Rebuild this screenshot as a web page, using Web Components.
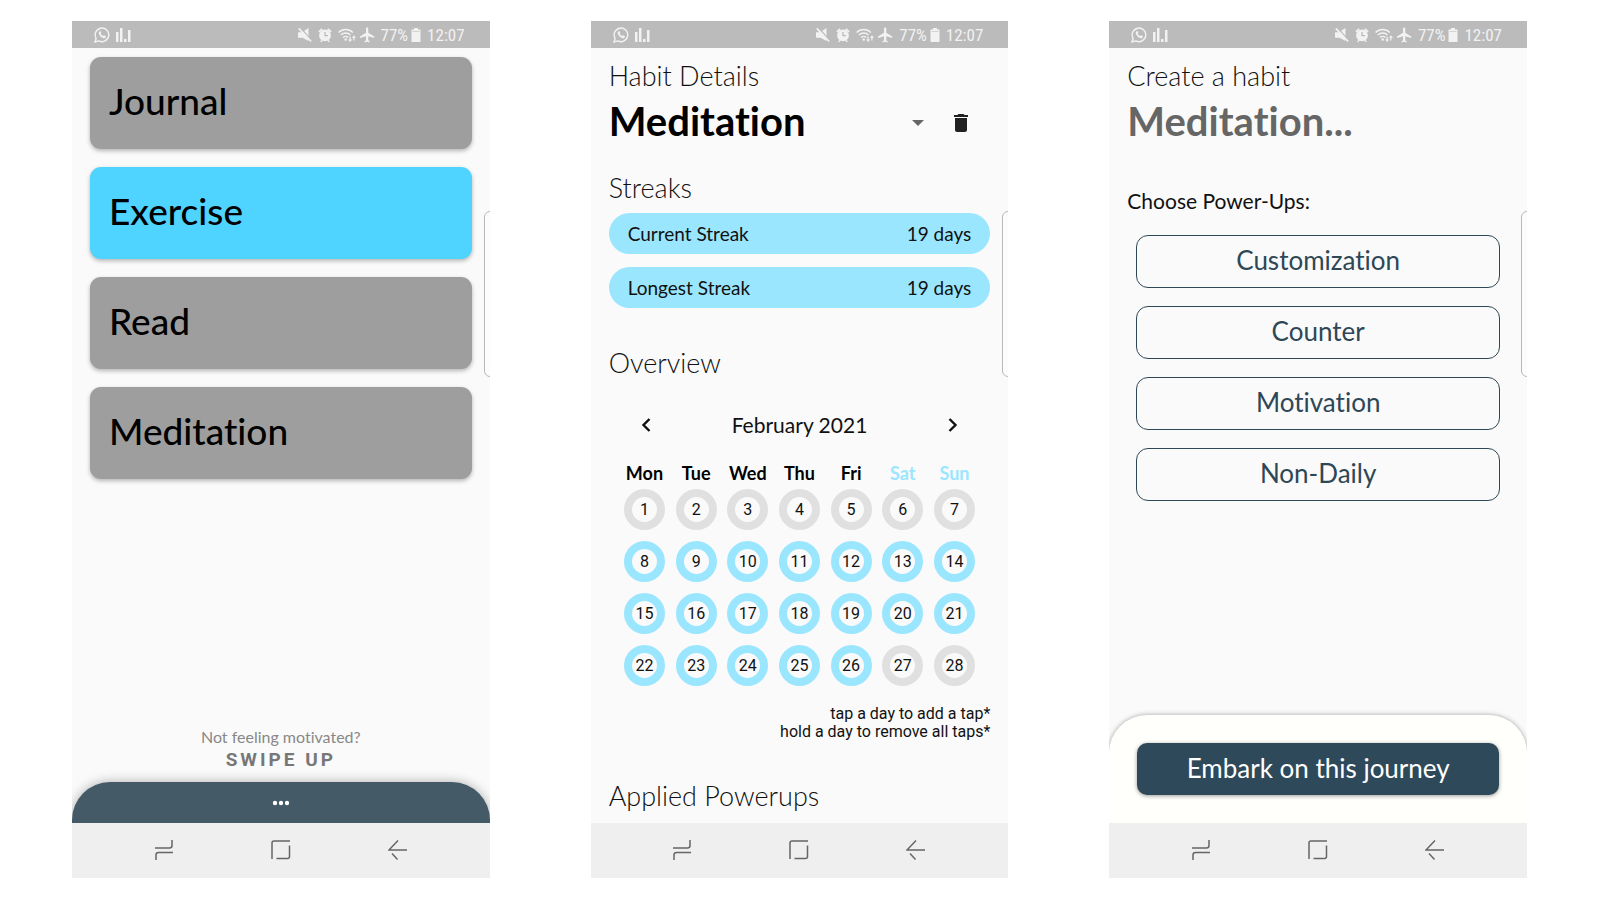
<!DOCTYPE html>
<html lang="en">
<head>
<meta charset="utf-8">
<title>Habit tracker screens</title>
<style>
  html, body { margin: 0; }
  body { background: #fff; font-family: Lato, "Liberation Sans", sans-serif; font-variant-ligatures: none; color: #111; }
</style>
</head>
<body>
<screen-gallery>
  <phone-screen>
    <habit-list>
      <habit-card>Journal</habit-card>
      <habit-card active>Exercise</habit-card>
      <habit-card>Read</habit-card>
      <habit-card>Meditation</habit-card>
    </habit-list>
    <swipe-hint slot="footer"></swipe-hint>
  </phone-screen>
  <phone-screen>
    <habit-details name="Meditation">
      <streak-pill label="Current Streak">19 days</streak-pill>
      <streak-pill label="Longest Streak">19 days</streak-pill>
      <habit-calendar slot="overview" month="February 2021" days="28" from="8" to="26"></habit-calendar>
    </habit-details>
  </phone-screen>
  <phone-screen>
    <create-habit>
      <power-up>Customization</power-up>
      <power-up>Counter</power-up>
      <power-up>Motivation</power-up>
      <power-up>Non-Daily</power-up>
    </create-habit>
    <action-sheet slot="footer">Embark on this journey</action-sheet>
  </phone-screen>
</screen-gallery>

<script>
const define = (name, html, setup) => {
  const template = document.createElement('template');
  template.innerHTML = html;
  customElements.define(name, class extends HTMLElement {
    constructor() {
      super();
      this.attachShadow({ mode: 'open' }).append(template.content.cloneNode(true));
    }
    connectedCallback() { if (setup) setup(this, this.shadowRoot); }
  });
};

const heading = `
  h1, h2 { margin: 0; font-size: 27px; line-height: 40px; font-weight: 300; }
`;
const buttonReset = `
  button { margin: 0; padding: 0; border: 0; background: none; font: inherit; color: inherit; cursor: pointer; }
`;

define('screen-gallery', `
<style>
  :host { display: grid; grid-template-columns: repeat(3, minmax(0, 1fr)); gap: 101px; box-sizing: border-box;
    min-height: 100vh; padding: 21px 73px 22px 72px; }
</style>
<slot></slot>`);

define('phone-screen', `
<style>
  :host { display: flex; flex-direction: column; position: relative; overflow: hidden; background: #fafafa; }
  main { flex: 1; padding: 0 18px; }
  .edge { position: absolute; right: -8px; top: 190px; width: 12px; height: 164px; border: 1px solid #b9b9b9; border-radius: 6px; background: #fcfcfc; }
</style>
<status-bar></status-bar>
<main><slot></slot></main>
<slot name="footer"></slot>
<nav-bar></nav-bar>
<div class="edge"></div>`);

define('status-bar', `
<style>
  :host { display: flex; align-items: center; gap: 6px; height: 27px; padding: 0 25px 0 22px; background: #bbb; color: #f2f2f2;
    font: 17px/26px "Roboto Condensed", Roboto, sans-serif; }
  svg { display: block; fill: currentColor; flex: none; }
  .stroke { fill: none; stroke: currentColor; }
  .wifi { margin-right: -2px; }
  .level { margin-left: -3px; }
  .space { flex: 1; }
</style>
<svg width="16" height="16" viewBox="0 0 16 16" aria-hidden="true">
  <path class="stroke" stroke-width="1.4" d="M1 15l1.1-3.7A6.8 6.8 0 1 1 4.800 13.900z"/>
  <path d="M5.700 4.200c.4-.3.8-.2 1 .2l.6 1.400c.1.4-.5.8-.5 1.100.5 1 1.300 1.700 2.300 2.200.3 0 .8-.9 1.200-.7l1.400.7c.5.3.1 1.500-.6 1.900-1.100.6-2.700 0-4.200-1.300C5.400 8.300 4.600 6.700 4.700 5.700c.1-.6.5-1.200 1-1.500z"/>
</svg>
<svg width="15" height="16" viewBox="0 0 15 16" aria-hidden="true">
  <path d="M0 5h2.500v10H0zM4 1h2.500v14H4zM8 12h2.500v3H8zM12 3h2.500v12H12z"/>
</svg>
<span class="space"></span>
<svg width="14" height="16" viewBox="0 0 14 16" aria-hidden="true">
  <path d="M0 5.200h4L10.500 1v13L4.500 10.800H0z"/>
  <path d="M2 0l12.500 14.500" stroke="#bbb" stroke-width="1.300"/>
  <path d="M.8 1.300l12.400 13.200" stroke="currentColor" stroke-width="1.700"/>
</svg>
<svg width="14" height="16" viewBox="0 0 14 16" aria-hidden="true">
  <circle cx="7" cy="8.300" r="5.900"/>
  <path d="M.3 4.200L3.600 1.200l1.200 1.200L1.500 5.400zM13.700 4.200l-3.300-3-1.200 1.200 3.300 3zM2 14.800l1.800-2.200 1 .8-1.700 1.900zM12 14.800l-1.800-2.200-1 .8 1.700 1.900z"/>
  <path class="stroke" style="stroke:#bbb" stroke-width="1.300" d="M7 5v3.600h3"/>
</svg>
<svg class="wifi" width="18" height="16" viewBox="0 0 18 16" aria-hidden="true">
  <path class="stroke" stroke-width="1.400" d="M.6 5.600a9.800 9.800 0 0 1 14.200 0M2.900 8.100a6.700 6.700 0 0 1 9.600 0M5.100 10.500a3.700 3.700 0 0 1 5.200 0"/>
  <circle cx="7.700" cy="12.500" r="1.300"/>
  <path d="M11.500 9.500h1.200v3h1.500L12.100 15 10 12.500h1.500zM15.300 13.500h1.200v-2.800H18L15.900 8.200l-2 2.500h1.400z"/>
</svg>
<svg width="15" height="16" viewBox="2 2 20 20" aria-hidden="true">
  <path d="M21 16v-2l-8-5V3.500c0-.83-.67-1.500-1.500-1.500S10 2.670 10 3.500V9l-8 5v2l8-2.500V19l-2 1.500V22l3.500-1 3.500 1v-1.500L13 19v-5.500l8 2.500z"/>
</svg>
<span>77%</span>
<svg class="level" width="10" height="16" viewBox="0 0 10 16" aria-hidden="true">
  <path d="M3 1h4v1.500h2.500V15h-9V2.500H3z"/><path d="M1.500 4.500h7" stroke="#d2d2d2"/>
</svg>
<span>12:07</span>`);

define('nav-bar', `
<style>
  ${buttonReset}
  :host { display: block; background: #efefef; color: #666; }
  nav { display: flex; justify-content: center; align-items: center; gap: 97px; height: 55px; padding-bottom: 1px; box-sizing: border-box; }
  svg { display: block; fill: none; stroke: currentColor; stroke-width: 1.500; }
</style>
<nav aria-label="System">
  <button aria-label="Recent apps"><svg width="20" height="22" viewBox="0 0 20 22"><path d="M1 9h14.500q2.500 0 2.500-2.500V1M19 13.500H4.500Q2 13.500 2 16v5"/></svg></button>
  <button aria-label="Home"><svg width="20" height="22" viewBox="0 0 20 22"><path d="M1 20V4q0-2 2-2H19M18.500 6.500V17.500q0 2-2 2H5.500"/></svg></button>
  <button aria-label="Back"><svg width="20" height="22" viewBox="0 0 20 22"><path d="M19 11H1L10 1.500M4 14.500L9.500 20.500"/></svg></button>
</nav>`);

define('habit-list', `
<style>
  :host { display: flex; flex-direction: column; gap: 18px; padding-top: 9px; }
</style>
<slot></slot>`);

define('habit-card', `
<style>
  ${buttonReset}
  :host { display: block; }
  button { display: block; width: 100%; height: 92px; padding: 0 19px 4px; border-radius: 11px; background: #9e9e9e; color: #000;
    font-size: 37px; line-height: 44px; font-weight: 500; text-align: left; box-shadow: 0 2px 4px rgba(0,0,0,.28); }
  :host([active]) button { background: #4fd3ff; }
</style>
<button><slot></slot></button>`);

define('swipe-hint', `
<style>
  ${buttonReset}
  :host { display: block; text-align: center; color: #888; }
  p { margin: 0; font-size: 16px; line-height: 20px; }
  strong { display: block; margin-bottom: 10px; font: 700 19px/25px "Roboto", sans-serif; letter-spacing: 3px; color: #777; }
  button { display: block; width: 100%; height: 41px; border-radius: 38px 38px 0 0; background: #455a67; color: #fff; box-shadow: 0 0 12px rgba(0,0,0,.3); }
  svg { display: block; margin: 0 auto; fill: currentColor; }
</style>
<p>Not feeling motivated?</p>
<strong>SWIPE UP</strong>
<button aria-label="Open panel"><svg width="18" height="6" viewBox="0 0 18 6"><circle cx="3" cy="3" r="2.200"/><circle cx="9" cy="3" r="2.200"/><circle cx="15" cy="3" r="2.200"/></svg></button>`);

define('habit-details', `
<style>
  ${heading}
  ${buttonReset}
  :host { display: block; padding-top: 8px; }
  .title { display: flex; align-items: center; height: 50px; margin-bottom: 22px; padding-right: 18px; }
  .title h2 { flex: 1; font-size: 40px; line-height: 50px; font-weight: 700; color: #000; }
  .title button { padding: 8px 4px 4px; }
  .title button + button { margin-left: 22px; }
  svg { display: block; fill: #212121; }
  .caret svg { fill: #666; }
  .streaks { display: flex; flex-direction: column; gap: 13px; margin: 5px 0 35px; }
  .hint { margin: 14px 0 35px; font: 16px/18px Roboto, sans-serif; text-align: right; }
</style>
<h1>Habit Details</h1>
<div class="title">
  <h2></h2>
  <button class="caret" aria-label="More"><svg width="12" height="6" viewBox="0 0 12 6"><path d="M0 0h12L6 6z"/></svg></button>
  <button aria-label="Delete habit"><svg width="14" height="18" viewBox="5 3 14 18"><path d="M6 19c0 1.100.9 2 2 2h8c1.100 0 2-.9 2-2V7H6v12zM19 4h-3.500l-1-1h-5l-1 1H5v2h14V4z"/></svg></button>
</div>
<h2>Streaks</h2>
<div class="streaks"><slot></slot></div>
<h2>Overview</h2>
<slot name="overview"></slot>
<p class="hint">tap a day to add a tap*<br>hold a day to remove all taps*</p>
<h2>Applied Powerups</h2>`, (host, root) => {
  root.querySelector('.title h2').textContent = host.getAttribute('name');
});

define('streak-pill', `
<style>
  :host { display: flex; justify-content: space-between; padding: 0 19px; border-radius: 21px; background: #9ae6ff; font-size: 19px; line-height: 41px; }
</style>
<span class="label"></span><span><slot></slot></span>`, (host, root) => {
  root.querySelector('.label').textContent = host.getAttribute('label');
});

define('habit-calendar', `
<style>
  ${buttonReset}
  :host { display: block; margin-top: 22px; padding: 0 10px; }
  header { display: flex; align-items: center; justify-content: space-between; height: 40px; margin-bottom: 19px; padding: 0 16px; font-size: 21px; line-height: 24px; }
  header svg { display: block; fill: none; stroke: #111; stroke-width: 2.400; }
  header button { padding: 3px 6px; }
  table { width: 100%; table-layout: fixed; border-collapse: collapse; }
  th { padding: 0; font-size: 18px; line-height: 19px; font-weight: 700; color: #000; }
  th.weekend { color: #9ae6ff; }
  td { height: 52px; padding: 0; text-align: center; vertical-align: middle; }
  td button { display: block; box-sizing: border-box; width: 41px; height: 41px; margin: 0 auto; border: 8px solid #e0e0e0; border-radius: 50%;
    font: 16px/25px Roboto, sans-serif; white-space: nowrap; }
  td button.done { border-color: #9ae6ff; }
  td span { display: block; margin: 0 -4px; }
</style>
<header>
  <button aria-label="Previous month"><svg width="10" height="14" viewBox="0 0 10 14"><path d="M8.500 1L2.500 7l6 6"/></svg></button>
  <span class="month"></span>
  <button aria-label="Next month"><svg width="10" height="14" viewBox="0 0 10 14"><path d="M1.500 1l6 6-6 6"/></svg></button>
</header>
<table>
  <thead><tr><th>Mon</th><th>Tue</th><th>Wed</th><th>Thu</th><th>Fri</th><th class="weekend">Sat</th><th class="weekend">Sun</th></tr></thead>
  <tbody></tbody>
</table>`, (host, root) => {
  const [days, from, to] = ['days', 'from', 'to'].map(key => Number(host.getAttribute(key)));
  root.querySelector('.month').textContent = host.getAttribute('month');
  const body = root.querySelector('tbody');
  body.replaceChildren();
  for (let day = 1; day <= days; day++) {
    const row = day % 7 === 1 ? body.insertRow() : body.lastElementChild;
    const done = day >= from && day <= to;
    row.insertCell().innerHTML = `<button class="${done ? 'done' : ''}"><span>${day}</span></button>`;
  }
});

define('create-habit', `
<style>
  ${heading}
  :host { display: block; padding-top: 8px; }
  input { display: block; box-sizing: border-box; width: 100%; height: 50px; margin: 0 0 43px; padding: 0; border: 0; outline: 0; background: none;
    font: inherit; font-size: 40px; font-weight: 700; color: #000; }
  input::placeholder { color: #666; opacity: 1; }
  p { margin: 0 0 22px; font-size: 21px; line-height: 24px; }
  .options { display: flex; flex-direction: column; gap: 18px; padding: 0 9px; }
</style>
<h1>Create a habit</h1>
<input type="text" aria-label="Habit name" placeholder="Meditation...">
<p>Choose Power-Ups:</p>
<div class="options"><slot></slot></div>`);

define('power-up', `
<style>
  ${buttonReset}
  :host { display: block; }
  button { display: block; box-sizing: border-box; width: 100%; height: 53px; padding-bottom: 3px; border: 1px solid #2e4756; border-radius: 12px;
    color: #2e4756; font-size: 26px; line-height: 30px; }
</style>
<button><slot></slot></button>`);

define('action-sheet', `
<style>
  ${buttonReset}
  :host { display: block; padding: 28px; border-radius: 38px 38px 0 0; background: #fffffb; box-shadow: 0 0 5px rgba(0,0,0,.35); }
  button { display: block; width: 100%; height: 52px; padding-bottom: 3px; border-radius: 10px; background: #2e495a; color: #fff;
    font-size: 26px; line-height: 30px; box-shadow: 0 1px 4px rgba(0,0,0,.4); }
</style>
<button><slot></slot></button>`);
</script>
</body>
</html>
